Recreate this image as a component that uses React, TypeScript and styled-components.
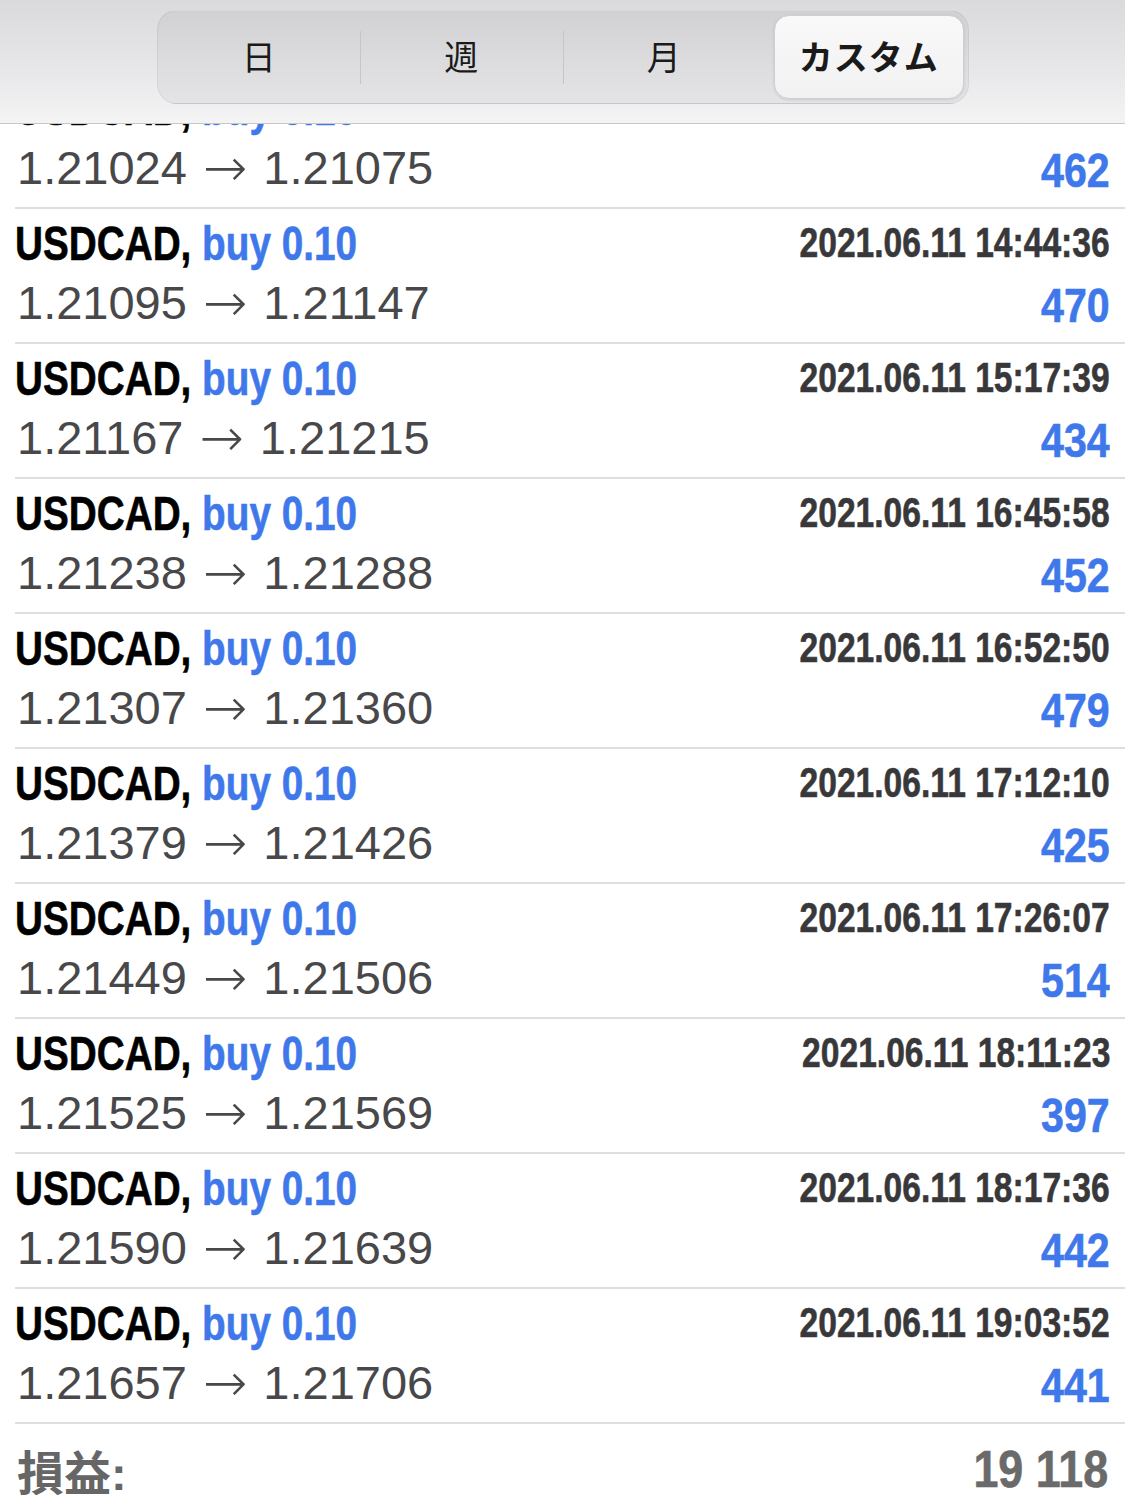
import React from "react";
import styled, { createGlobalStyle } from "styled-components";

const GlobalStyle = createGlobalStyle`
  html, body {
    margin: 0;
    padding: 0;
    overflow: hidden;
    background: #ffffff;
  }
  body {
    font-family: "Liberation Sans", Arial, "Noto Sans CJK JP", sans-serif;
  }
`;

const Screen = styled.div`
  width: 1125px;
  height: 1498px;
  overflow: hidden;
  display: flex;
  flex-direction: column;
  background: #ffffff;
`;

const Header = styled.header`
  flex: none;
  height: 123px;
  box-sizing: content-box;
  border-bottom: 1px solid #c8c8ca;
  background: linear-gradient(180deg, #dadadc 0%, #e8e8ea 60%, #f4f4f5 100%);
  display: flex;
  justify-content: center;
  align-items: flex-start;
`;

const Segmented = styled.div`
  margin-top: 10px;
  width: 812px;
  height: 94px;
  box-sizing: border-box;
  border-radius: 20px;
  border: 1px solid rgba(0, 0, 0, 0.05);
  background: linear-gradient(180deg, #d1d1d4 0%, #dcdcdf 55%, #e4e4e6 100%);
  display: grid;
  grid-template-columns: repeat(4, 1fr);
  align-items: stretch;
`;

const Segment = styled.div<{ $active?: boolean; $divider?: boolean }>`
  position: relative;
  display: flex;
  align-items: center;
  justify-content: center;
  font-family: "Noto Sans CJK JP", "Liberation Sans", sans-serif;
  font-size: 34px;
  font-weight: ${(p) => (p.$active ? 700 : 400)};
  color: #1a1a1a;
  margin: ${(p) => (p.$active ? "4px 4px 4px 9px" : "0")};
  padding-bottom: 3px;
  border-radius: 15px;
  background: ${(p) =>
    p.$active ? "linear-gradient(180deg, #f9f9f9 0%, #f1f1f2 100%)" : "transparent"};
  border: ${(p) => (p.$active ? "1px solid #cfcfd3" : "none")};
  box-shadow: ${(p) => (p.$active ? "0 1px 3px rgba(0,0,0,0.12)" : "none")};
  letter-spacing: ${(p) => (p.$active ? "1px" : "0")};

  &::after {
    content: "";
    display: ${(p) => (p.$divider ? "block" : "none")};
    position: absolute;
    right: -1px;
    top: 20px;
    width: 1px;
    height: 53px;
    background: #c6c6ca;
  }
`;

const List = styled.div`
  flex: 1;
  overflow: hidden;
  display: flex;
  flex-direction: column;
`;

const Row = styled.div<{ $first?: boolean }>`
  flex: none;
  margin-left: 15px;
  margin-top: ${(p) => (p.$first ? "-50px" : "0")};
  box-sizing: border-box;
  height: 135px;
  border-bottom: 2px solid #dedede;
  padding: 6px 15px 0 0;
  display: flex;
  flex-direction: column;
`;

const TopLine = styled.div`
  height: 55px;
  display: flex;
  align-items: center;
  justify-content: space-between;
`;

const BottomLine = styled.div`
  margin-top: 4px;
  height: 56px;
  display: flex;
  align-items: center;
  justify-content: space-between;
`;

const Condensed = styled.span<{ $right?: boolean }>`
  display: inline-block;
  white-space: nowrap;
  font-weight: 700;
  -webkit-text-stroke: 0.6px currentColor;
  transform: scaleX(0.79);
  transform-origin: ${(p) => (p.$right ? "right center" : "left center")};
`;

const Title = styled(Condensed)`
  font-size: 49px;
  color: #000000;
`;

const Blue = styled.span`
  color: #3f78ea;
`;

const DateText = styled(Condensed)`
  font-size: 42px;
  color: #38383a;
  transform: scaleX(0.8);
`;

const Price = styled.span`
  font-size: 47px;
  color: #48484a;
  white-space: nowrap;
  margin-left: 2px;
  display: flex;
  align-items: center;
  gap: 16px;
`;

const Arrow = styled.span`
  font-family: "DejaVu Sans", sans-serif;
  font-size: 53px;
  font-weight: 300;
  color: #48484a;
  line-height: 1;
`;

const Profit = styled(Condensed)`
  font-size: 49px;
  color: #3f78ea;
  margin-top: 5px;
  transform: scaleX(0.84);
`;

const Footer = styled.div`
  flex: none;
  margin-left: 15px;
  padding: 18px 15px 0 2px;
  height: 54px;
  display: flex;
  align-items: center;
  justify-content: space-between;
`;

const FooterLabel = styled.span`
  font-family: "Liberation Sans", "Noto Sans CJK JP", sans-serif;
  font-size: 47px;
  font-weight: 700;
  color: #666666;
`;

const FooterValue = styled(Condensed)`
  font-size: 51px;
  color: #6a6a6a;
  transform: scaleX(0.88);
  margin-right: 2px;
`;

type Trade = { date: string; from: string; to: string; profit: string };

const trades: Trade[] = [
  { date: "2021.06.11 14:21:05", from: "1.21024", to: "1.21075", profit: "462" },
  { date: "2021.06.11 14:44:36", from: "1.21095", to: "1.21147", profit: "470" },
  { date: "2021.06.11 15:17:39", from: "1.21167", to: "1.21215", profit: "434" },
  { date: "2021.06.11 16:45:58", from: "1.21238", to: "1.21288", profit: "452" },
  { date: "2021.06.11 16:52:50", from: "1.21307", to: "1.21360", profit: "479" },
  { date: "2021.06.11 17:12:10", from: "1.21379", to: "1.21426", profit: "425" },
  { date: "2021.06.11 17:26:07", from: "1.21449", to: "1.21506", profit: "514" },
  { date: "2021.06.11 18:11:23", from: "1.21525", to: "1.21569", profit: "397" },
  { date: "2021.06.11 18:17:36", from: "1.21590", to: "1.21639", profit: "442" },
  { date: "2021.06.11 19:03:52", from: "1.21657", to: "1.21706", profit: "441" },
];

export default function App() {
  return (
    <Screen>
      <GlobalStyle />
      <Header>
        <Segmented>
          <Segment $divider>日</Segment>
          <Segment $divider>週</Segment>
          <Segment>月</Segment>
          <Segment $active>カスタム</Segment>
        </Segmented>
      </Header>
      <List>
        {trades.map((t, i) => (
          <Row key={t.date} $first={i === 0}>
            <TopLine>
              <Title>
                USDCAD, <Blue>buy 0.10</Blue>
              </Title>
              <DateText $right>{t.date}</DateText>
            </TopLine>
            <BottomLine>
              <Price>
                <span>{t.from}</span>
                <Arrow>→</Arrow>
                <span>{t.to}</span>
              </Price>
              <Profit $right>{t.profit}</Profit>
            </BottomLine>
          </Row>
        ))}
        <Footer>
          <FooterLabel>損益:</FooterLabel>
          <FooterValue $right>19 118</FooterValue>
        </Footer>
      </List>
    </Screen>
  );
}
